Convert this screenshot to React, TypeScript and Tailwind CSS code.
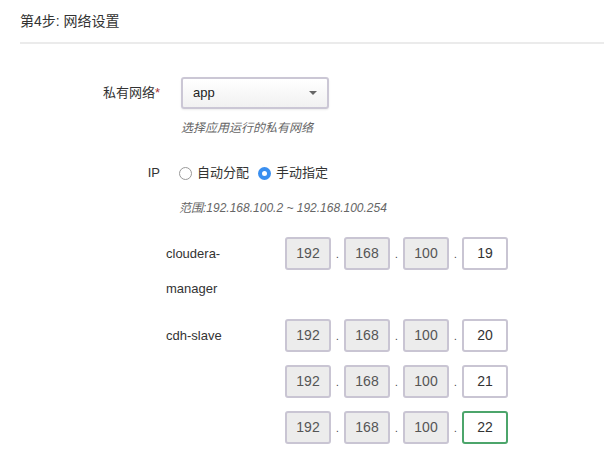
import React from "react";

const font = "font-['Liberation_Sans','Noto_Sans_CJK_SC',sans-serif]";

const IpRow: React.FC<{ last: string; active?: boolean }> = ({ last, active }) => {
  const fixed = ["192", "168", "100"];
  return (
    <div className="flex items-center h-[33px]">
      {fixed.map((n) => (
        <React.Fragment key={n}>
          <div className="flex w-[46px] h-[33px] items-center justify-center rounded-[3px] border-2 border-[#c9c5d3] bg-[#ececec] text-[14px] text-[#555]">
            {n}
          </div>
          <span className="w-[13px] text-center text-[10px] leading-none text-[#333] pt-[2px]">.</span>
        </React.Fragment>
      ))}
      <div
        className={
          active
            ? "flex w-[46px] h-[33px] items-center justify-center rounded-[3px] border-2 border-[#4ca56b] bg-white text-[14px] text-[#333]"
            : "flex w-[46px] h-[33px] items-center justify-center rounded-[3px] border-2 border-[#c9c5d3] bg-white text-[14px] text-[#333]"
        }
      >
        {last}
      </div>
    </div>
  );
};

const App: React.FC = () => {
  return (
    <div className={`w-[604px] h-[463px] bg-white text-[#333] ${font} overflow-hidden`}>
      <div className="pl-5">
        <div className="h-[44px] flex items-center border-b-2 border-[#ebebeb] text-[14px] text-[#333]">
          第4步: 网络设置
        </div>
      </div>

      <div className="pl-5 pt-[33px]">
        {/* private network */}
        <div className="flex">
          <div className="w-[140px] h-[32px] flex items-center justify-end text-[13px]">
            私有网络<span className="text-[#a33]">*</span>
          </div>
          <div className="ml-[21px]">
            <div className="flex w-[148px] h-[32px] items-center justify-between rounded-[3px] border-2 border-[#cbc7d5] bg-gradient-to-b from-white to-[#f1f1f1] pl-[10px] pr-[10px] shadow-[0_1px_2px_rgba(0,0,0,0.08)] text-[13px] text-[#222]">
              <span>app</span>
              <span className="w-0 h-0 border-l-[4px] border-r-[4px] border-t-[4px] border-l-transparent border-r-transparent border-t-[#666]" />
            </div>
            <div className="mt-[10px] text-[12px] italic text-[#666]">选择应用运行的私有网络</div>
          </div>
        </div>

        {/* IP */}
        <div className="flex mt-[26px]">
          <div className="w-[140px] h-[20px] flex items-center justify-end text-[13px]">IP</div>
          <div className="ml-[19px]">
            <div className="flex items-center h-[20px] text-[13px]">
              <span className="w-[13px] h-[13px] rounded-full border border-[#999] bg-white" />
              <span className="ml-[5px]">自动分配</span>
              <span className="ml-[9px] w-[13px] h-[13px] rounded-full bg-[#3a8ff0] flex items-center justify-center">
                <span className="w-[5px] h-[5px] rounded-full bg-white" />
              </span>
              <span className="ml-[5px]">手动指定</span>
            </div>
            <div className="mt-[16px] text-[12px] italic text-[#666]">范围:192.168.100.2 ~ 192.168.100.254</div>
          </div>
        </div>

        {/* hosts */}
        <div className="ml-[146px] mt-[20px] flex flex-col gap-[13px]">
          <div className="flex items-start">
            <div className="w-[119px] pr-[30px] text-[13px] leading-[35px] -mt-[1px]">cloudera-manager</div>
            <IpRow last="19" />
          </div>
          <div className="flex items-start">
            <div className="w-[119px] pr-[30px] text-[13px] leading-[33px]">cdh-slave</div>
            <div className="flex flex-col gap-[13px]">
              <IpRow last="20" />
              <IpRow last="21" />
              <IpRow last="22" active />
            </div>
          </div>
        </div>
      </div>
    </div>
  );
};

export default App;
